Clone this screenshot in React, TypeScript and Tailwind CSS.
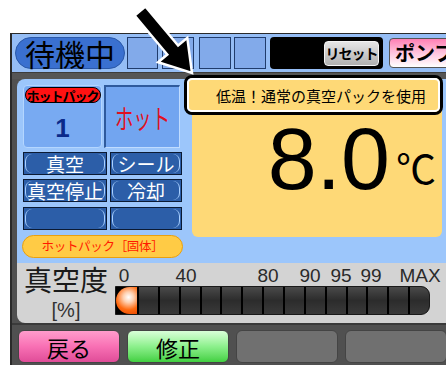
import React from 'react';

const JP = "font-['Noto_Sans_CJK_JP',sans-serif]";
const SANS = "font-['Liberation_Sans',Arial,sans-serif]";

const scaleLabels = [
  { t: '0', x: 9 },
  { t: '40', x: 71 },
  { t: '80', x: 153 },
  { t: '90', x: 195 },
  { t: '95', x: 226 },
  { t: '99', x: 256 },
  { t: 'MAX', x: 305 },
];

// blue soft-key with the little light corner brackets
const PanelButton = ({ label, className }: { label?: string; className: string }) => (
  <div className={`h-[23px] border border-[#0b1a33] bg-[#2c5ea8] p-[1px] ${className}`}>
    <div className="flex h-full items-center justify-center whitespace-nowrap rounded-[7px] border-x border-[#a9d0ff] text-[19px] leading-none text-white">
      {label}
    </div>
  </div>
);

const App = () => {
  return (
    <div className={`relative h-[365px] w-[446px] overflow-hidden bg-white ${JP}`}>
      <div className="h-full pl-[10px] pt-[33px]">
        <div className="flex h-full flex-col border-l-2 border-t border-[#2a2a2a] bg-[#505050]">
          {/* status bar */}
          <div className="flex h-[38px] shrink-0 items-center bg-[#95bdf5] pl-[3px]">
            <div className="flex h-[32px] w-[110px] shrink-0 items-center justify-center whitespace-nowrap rounded-full border border-[#2a58a8] bg-[#3a70d0] text-[30px] leading-none text-black">
              待機中
            </div>
            <div className="ml-[2px] h-[32px] w-[31px] shrink-0 border border-[#203c6c] bg-[#82aaea]" />
            <div className="ml-[4px] h-[32px] w-[32px] shrink-0 border border-[#203c6c] bg-[#82aaea]" />
            <div className="ml-[5px] h-[32px] w-[32px] shrink-0 border border-[#203c6c] bg-[#82aaea]" />
            <div className="ml-[3px] h-[32px] w-[32px] shrink-0 border border-[#203c6c] bg-[#82aaea]" />
            <div className="ml-[4px] flex h-[32px] w-[113px] shrink-0 items-center justify-end rounded-[4px] bg-black pr-[4px]">
              <div className="flex h-[25px] w-[55px] items-center justify-center whitespace-nowrap rounded-[4px] border border-[#f4f4f4] bg-gradient-to-b from-[#e6e6e6] to-[#b0b0b0] text-[14px] font-bold leading-none tracking-[-1px] text-black">
                リセット
              </div>
            </div>
            <div className="ml-[6px] flex h-[30px] w-[62px] shrink-0 items-center whitespace-nowrap rounded-[4px] border border-[#555] bg-gradient-to-b from-[#ff7fb4] via-[#ffc4de] to-white pl-[5px] text-[20px] font-bold leading-none text-black">
              ポンプ
            </div>
          </div>

          <div className="h-[7px] shrink-0 border-t border-[#3c3c3c] bg-[#555]" />

          {/* main panel */}
          <div className="ml-[5px] flex h-[184px] shrink-0 rounded-tl-[8px] bg-[#9cc6fb]">
            {/* left column */}
            <div className="ml-[5px] flex w-[161px] shrink-0 flex-col pt-[6px]">
              <div className="flex h-[63px]">
                <div className="ml-[1px] flex w-[79px] flex-col items-center rounded-[4px] border border-[#b4d6ff] bg-[#78aaf2] pt-[1px]">
                  <div className="flex h-[16px] w-[76px] items-center justify-center whitespace-nowrap rounded-full border border-black bg-[#ff1212] text-[13px] font-bold leading-none tracking-[-1px] text-black">
                    ホットパック
                  </div>
                  <div className={`mt-[12px] text-[26px] font-bold leading-none text-[#0b2a8a] ${SANS}`}>1</div>
                </div>
                <div className="ml-[2px] flex w-[76px] items-center justify-center border-b border-l-2 border-r border-t-2 border-b-[#c0dcff] border-l-[#2f5a9c] border-r-[#c0dcff] border-t-[#2f5a9c] bg-[#72a5f0]">
                  <span className="inline-block scale-x-[0.68] whitespace-nowrap text-[27px] leading-none text-[#e01020]">ホット</span>
                </div>
              </div>

              <div className="ml-[1px] mt-[4px] flex gap-[3px]">
                <PanelButton label="真空" className="w-[84px]" />
                <PanelButton label="シール" className="w-[72px]" />
              </div>
              <div className="ml-[1px] mt-[4px] flex gap-[3px]">
                <PanelButton label="真空停止" className="w-[84px]" />
                <PanelButton label="冷却" className="w-[72px]" />
              </div>
              <div className="ml-[1px] mt-[5px] flex gap-[3px]">
                <PanelButton className="w-[84px]" />
                <PanelButton className="w-[72px]" />
              </div>

              <div className="mt-[5px] flex h-[23px] w-[161px] items-center justify-center whitespace-nowrap rounded-full border border-[#e8a010] bg-[#ffcb45] text-[12.5px] leading-none tracking-tight text-[#ff1a00]">
                ホットパック［固体］
              </div>
            </div>

            {/* temperature panel */}
            <div className="-mt-[1px] ml-[9px] flex h-[159px] w-[250px] shrink-0 flex-col rounded-[6px] bg-[#fed977]">
              <div className="-ml-[8px] -mt-[3px] h-[40px] w-[259px] rounded-[8px] border-[3px] border-black">
                <div className="flex h-full items-center whitespace-nowrap rounded-[5px] border-2 border-white bg-[#fed977] pl-[27px] text-[15px] leading-none text-black">
                  低温！通常の真空パックを使用
                </div>
              </div>
              <div className="flex items-baseline justify-end pr-[6px]">
                <span className={`text-[88px] leading-none text-black ${SANS}`}>8.0</span>
                <span className="relative -top-[5px] ml-[6px] w-[40px] text-[40px] leading-none text-black">℃</span>
              </div>
            </div>
          </div>

          {/* vacuum gauge */}
          <div className="ml-[5px] flex h-[60px] shrink-0 rounded-bl-[8px] bg-[#d3d3d3] pt-[2px]">
            <div className="ml-[6px] flex w-[86px] shrink-0 flex-col items-center">
              <div className="whitespace-nowrap text-[28px] leading-none text-[#1a1a1a]">真空度</div>
              <div className={`mt-[7px] text-[20px] leading-none text-[#333] ${SANS}`}>[%]</div>
            </div>
            <div className="ml-[6px] flex w-[315px] shrink-0 flex-col">
              <div className={`relative h-[21px] text-[19px] leading-none text-[#2a2a2a] ${SANS}`}>
                {scaleLabels.map((l) => (
                  <span key={l.t} className="absolute top-[1px] -translate-x-1/2" style={{ left: l.x }}>
                    {l.t}
                  </span>
                ))}
              </div>
              <div className="flex h-[29px] rounded-r-[9px] border border-[#1a1a1a] bg-black">
                <div className="w-[21px] shrink-0 rounded-l-full bg-[radial-gradient(circle_at_60%_38%,#ffffff_0%,#ffd0b0_25%,#ff6a10_60%,#e04000_100%)]" />
                {Array.from({ length: 14 }).map((_, i) => (
                  <div
                    key={i}
                    className={`flex-1 border-l-2 border-black bg-gradient-to-b from-[#4a4a4a] via-[#2c2c2c] to-[#3a3a3a] ${i === 13 ? 'rounded-r-[8px]' : ''}`}
                  />
                ))}
              </div>
            </div>
          </div>

          {/* soft keys */}
          <div className="flex flex-1 gap-[7px] border-t-2 border-[#3a3a3a] pl-[6px] pt-[5px]">
            <div className="flex h-[33px] w-[102px] shrink-0 items-center justify-center rounded-[6px] border border-[#444] bg-gradient-to-b from-[#ff9ccc] via-[#f870b4] to-[#e04c98] text-[22px] leading-none text-black">
              戻る
            </div>
            <div className="flex h-[33px] w-[102px] shrink-0 items-center justify-center rounded-[6px] border border-[#444] bg-gradient-to-b from-[#d8ffd8] via-[#8cf08c] to-[#40d040] text-[22px] leading-none text-black">
              修正
            </div>
            <div className="h-[33px] w-[102px] shrink-0 rounded-[6px] border border-[#444] bg-[#707070]" />
            <div className="h-[33px] w-[102px] shrink-0 rounded-[6px] border border-[#444] bg-[#707070]" />
          </div>
        </div>
      </div>

      {/* pointer arrow */}
      <svg className="pointer-events-none absolute inset-0" width="446" height="365" viewBox="0 0 446 365">
        <polygon
          points="145.4,6.5 178.1,45.5 187.3,37.8 192,73 158.1,62.2 167.3,54.5 134.6,15.5"
          fill="black"
          stroke="white"
          strokeWidth="2.5"
          strokeLinejoin="miter"
        />
      </svg>
    </div>
  );
};

export default App;
